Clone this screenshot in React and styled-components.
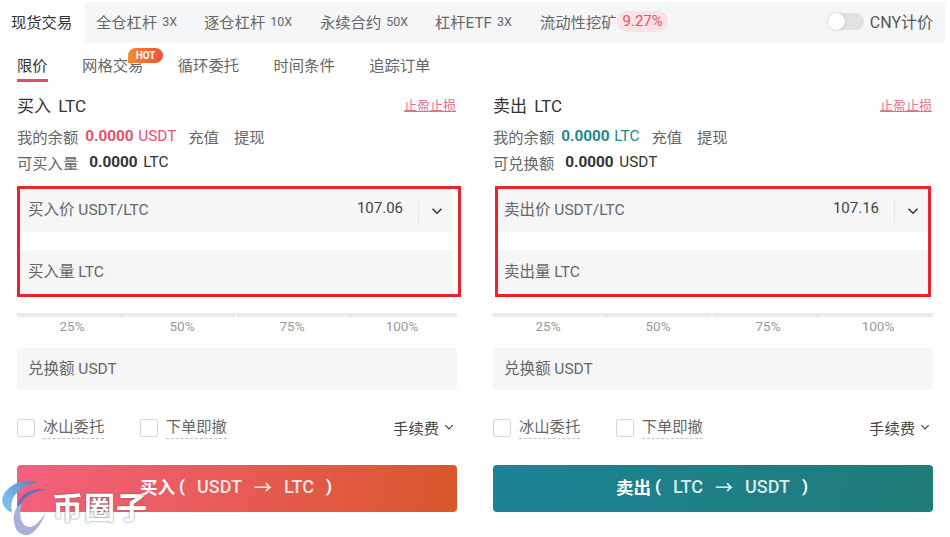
import React from "react";
import styled, { createGlobalStyle } from "styled-components";

const GlobalStyle = createGlobalStyle`
  html, body {
    margin: 0;
    padding: 0;
    background: #fff;
  }
  body {
    font-family: "Roboto", "Noto Sans CJK SC", sans-serif;
    color: #333;
  }
  * {
    box-sizing: border-box;
  }
`;

const Page = styled.div`
  position: relative;
  width: 950px;
  height: 537px;
  overflow: hidden;
  padding-top: 2px;
`;

const TopBar = styled.div`
  display: flex;
  align-items: center;
  height: 41px;
  width: 945px;
  background: #f5f6f7;
  font-size: 15.3px;
  color: #666;
`;

const TopTab = styled.div`
  display: flex;
  align-items: center;
  height: 100%;
  width: ${(p) => p.$w}px;
  padding: 0 0 3px 11px;
  white-space: nowrap;
  background: ${(p) => (p.$active ? "#fff" : "transparent")};
  color: ${(p) => (p.$active ? "#333" : "#666")};
`;

const Leverage = styled.span`
  margin-left: 5px;
  font-size: 12.5px;
`;

const Rate = styled.span`
  padding: 0 5px 1px 6px;
  border-radius: 10px;
  background: #f9e3e6;
  color: #e8526b;
  font-size: 15px;
  line-height: 20px;
`;

const CnySwitch = styled.div`
  display: flex;
  align-items: center;
  margin-left: auto;
  margin-right: 12px;
  padding-bottom: 3px;
  font-size: 16px;
  color: #555;
`;

const SwitchTrack = styled.div`
  position: relative;
  width: 36px;
  height: 17px;
  margin-right: 6px;
  border-radius: 9px;
  background: #e2e2e2;
`;

const SwitchKnob = styled.div`
  position: absolute;
  left: 0;
  top: 0;
  width: 17px;
  height: 17px;
  border-radius: 50%;
  background: #fff;
  box-shadow: 0 0 3px rgba(0, 0, 0, 0.2);
`;

const SubTabs = styled.div`
  display: flex;
  height: 40px;
  padding-left: 17px;
  gap: 34.5px;
  font-size: 15.3px;
  color: #666;
`;

const SubTab = styled.div`
  position: relative;
  height: 40px;
  padding-top: 12px;
  line-height: 22px;
  white-space: nowrap;
  color: ${(p) => (p.$active ? "#333" : "#666")};
  &::after {
    content: "";
    display: ${(p) => (p.$active ? "block" : "none")};
    position: absolute;
    left: 0;
    right: 0;
    top: 36px;
    height: 3px;
    background: #d8506a;
  }
`;

const HotBadge = styled.span`
  position: absolute;
  left: 46px;
  top: 5px;
  width: 35px;
  height: 15px;
  border-radius: 8px 8px 8px 0;
  background: linear-gradient(90deg, #f58a2c, #f0503c);
  color: #fff;
  font-size: 10px;
  font-weight: 700;
  line-height: 15px;
  text-align: center;
`;

const Panels = styled.div`
  display: flex;
  padding-left: 17px;
  gap: 36px;
`;

const Panel = styled.div`
  width: 440px;
`;

const TitleRow = styled.div`
  display: flex;
  align-items: center;
  justify-content: space-between;
  height: 24px;
  margin-top: 9px;
  font-size: 17px;
  word-spacing: 3px;
  color: #333;
`;

const StopLink = styled.span`
  margin-right: 1px;
  font-size: 13px;
  color: #e2708a;
  text-decoration: underline;
`;

const InfoRow = styled.div`
  display: flex;
  align-items: center;
  height: 26px;
  margin-top: ${(p) => p.$top || 0}px;
  font-size: 15.3px;
  color: #666;
  white-space: nowrap;
`;

const Balance = styled.span`
  margin: 0 12px 0 7px;
  color: ${(p) => p.$color};
  word-spacing: 1px;
  b {
    font-weight: 700;
  }
`;

const Amount = styled.span`
  margin-left: 11px;
  color: #333;
  word-spacing: 2px;
  b {
    font-weight: 700;
  }
`;

const ActionLink = styled.span`
  margin-right: 15px;
`;

/* two fields with the red annotation frame drawn over them */
const InputGroup = styled.div`
  position: relative;
  display: flex;
  flex-direction: column;
  gap: 18px;
  margin-top: 14px;
  padding: 0 4px 0 3px;
`;

const RedFrame = styled.div`
  position: absolute;
  left: ${(p) => p.$left}px;
  top: -3px;
  bottom: -3px;
  width: ${(p) => p.$w}px;
  border: 3px solid #e8252f;
  pointer-events: none;
`;

const InputRow = styled.div`
  display: flex;
  align-items: center;
  height: ${(p) => p.$h}px;
  padding-left: 8px;
  background: #f6f6f6;
  font-size: 15.5px;
  color: #666;
`;

const InputText = styled.span`
  margin-bottom: ${(p) => p.$lift}px;
`;

const Price = styled(InputText)`
  margin-left: auto;
  padding-right: 15px;
  font-size: 15px;
  color: #444;
`;

const UnitDrop = styled.span`
  display: flex;
  align-items: center;
  justify-content: center;
  width: 35px;
  height: 23px;
  padding-left: 1px;
  border-left: 1px solid #e6e6e6;
`;

const Slider = styled.div`
  display: grid;
  grid-template-columns: repeat(4, 1fr);
  margin-top: 19px;
  border-top: 4px solid #e9e9e9;
`;

const Mark = styled.div`
  position: relative;
  text-align: center;
  font-size: 13.5px;
  line-height: 16px;
  padding: 1px 0 1px;
  color: #9a9a9a;
  &:not(:last-child)::after {
    content: "";
    position: absolute;
    right: 0;
    top: -4px;
    width: 2px;
    height: 4px;
    background: #f4f4f4;
  }
`;

const TotalRow = styled.div`
  display: flex;
  align-items: center;
  height: 42px;
  margin-top: 13px;
  padding: 0 11px 4px;
  border-radius: 3px;
  background: #f6f6f6;
  font-size: 15.5px;
  color: #666;
`;

const OptionRow = styled.div`
  display: flex;
  align-items: center;
  height: 22px;
  margin-top: 27px;
  font-size: 15.3px;
  color: #666;
`;

const CheckBox = styled.span`
  width: 18px;
  height: 18px;
  margin-right: 8px;
  border: 1px solid #d8d8d8;
  border-radius: 2px;
  background: #fff;
`;

const OptionLabel = styled.span`
  margin-right: 35.5px;
  line-height: 20px;
  padding-bottom: 1px;
  border-bottom: 1px dashed #c4c4c4;
`;

const Fee = styled.span`
  display: flex;
  align-items: center;
  gap: 5px;
  margin-left: auto;
  margin-right: 3px;
  padding-bottom: 2px;
  color: #444;
`;

const ActionButton = styled.div`
  display: flex;
  align-items: center;
  justify-content: center;
  gap: 12px;
  height: 47px;
  margin-top: 26px;
  padding: 0 2px 5px 0;
  border-radius: 4px;
  background: ${(p) => p.$bg};
  color: #fff;
  font-size: 17px;
  font-weight: 700;
  white-space: nowrap;
`;

const ButtonSide = styled.span`
  margin-right: -8px;
  font-size: 17.5px;
`;

const ButtonPair = styled.span`
  font-size: 18px;
  font-weight: 500;
  color: rgba(255, 255, 255, 0.86);
`;

const Watermark = styled.div`
  position: absolute;
  left: 0;
  top: 470px;
  width: 150px;
  height: 67px;
  pointer-events: none;
`;

const WatermarkText = styled.span`
  position: absolute;
  left: 52px;
  top: 21px;
  font-size: 31px;
  line-height: 36px;
  font-weight: 700;
  color: #fff;
  letter-spacing: 1px;
  text-shadow: 0 0 2px rgba(90, 90, 90, 0.95);
`;

function Chevron({ size = 12, color = "#333" }) {
  return (
    <svg width={size} height={size} viewBox="0 0 12 12" fill="none">
      <path d="M1.5 3.8 6 8.2l4.5-4.4" stroke={color} strokeWidth="1.5" />
    </svg>
  );
}

function TradePanel({ side }) {
  const buy = side === "buy";
  const base = buy ? "USDT" : "LTC";
  const target = buy ? "LTC" : "USDT";
  return (
    <Panel>
      <TitleRow>
        <span>{buy ? "买入" : "卖出"} LTC</span>
        <StopLink>止盈止损</StopLink>
      </TitleRow>
      <InfoRow $top={7}>
        我的余额
        <Balance $color={buy ? "#e8526b" : "#1f8a8c"}>
          <b>0.0000</b> {base}
        </Balance>
        <ActionLink>充值</ActionLink>
        <ActionLink>提现</ActionLink>
      </InfoRow>
      <InfoRow>
        {buy ? "可买入量" : "可兑换额"}
        <Amount>
          <b>0.0000</b> {target}
        </Amount>
      </InfoRow>
      <InputGroup>
        <InputRow $h={43}>
          <InputText $lift={6}>{buy ? "买入价" : "卖出价"} USDT/LTC</InputText>
          <Price $lift={6}>{buy ? "107.06" : "107.16"}</Price>
          <UnitDrop>
            <Chevron />
          </UnitDrop>
        </InputRow>
        <InputRow $h={44}>
          <InputText $lift={4}>{buy ? "买入量" : "卖出量"} LTC</InputText>
        </InputRow>
        <RedFrame $left={buy ? 0 : 2} $w={buy ? 444 : 436} />
      </InputGroup>
      <Slider>
        <Mark>25%</Mark>
        <Mark>50%</Mark>
        <Mark>75%</Mark>
        <Mark>100%</Mark>
      </Slider>
      <TotalRow>兑换额 USDT</TotalRow>
      <OptionRow>
        <CheckBox />
        <OptionLabel>冰山委托</OptionLabel>
        <CheckBox />
        <OptionLabel>下单即撤</OptionLabel>
        <Fee>
          手续费
          <Chevron size={10} color="#444" />
        </Fee>
      </OptionRow>
      <ActionButton
        $bg={
          buy
            ? "linear-gradient(100deg, #f4607f, #d9562a)"
            : "linear-gradient(100deg, #1d8296, #1f7c78)"
        }
      >
        <ButtonSide>{buy ? "买入" : "卖出"}</ButtonSide>
        <span>(</span>
        <ButtonPair>{base}</ButtonPair>
        <ButtonPair>→</ButtonPair>
        <ButtonPair>{target}</ButtonPair>
        <span>)</span>
      </ActionButton>
    </Panel>
  );
}

export default function App() {
  return (
    <Page>
      <GlobalStyle />
      <TopBar>
        <TopTab $w={85} $active>现货交易</TopTab>
        <TopTab $w={108}>全仓杠杆<Leverage>3X</Leverage></TopTab>
        <TopTab $w={116}>逐仓杠杆<Leverage>10X</Leverage></TopTab>
        <TopTab $w={115}>永续合约<Leverage>50X</Leverage></TopTab>
        <TopTab $w={105}>杠杆ETF<Leverage>3X</Leverage></TopTab>
        <TopTab $w={150}>
          流动性挖矿<Rate>9.27%</Rate>
        </TopTab>
        <CnySwitch>
          <SwitchTrack>
            <SwitchKnob />
          </SwitchTrack>
          CNY计价
        </CnySwitch>
      </TopBar>
      <SubTabs>
        <SubTab $active>限价</SubTab>
        <SubTab>
          网格交易
          <HotBadge>HOT</HotBadge>
        </SubTab>
        <SubTab>循环委托</SubTab>
        <SubTab>时间条件</SubTab>
        <SubTab>追踪订单</SubTab>
      </SubTabs>
      <Panels>
        <TradePanel side="buy" />
        <TradePanel side="sell" />
      </Panels>
      <Watermark>
        <svg width="50" height="67" viewBox="0 0 50 67" fill="none">
          <defs>
            <linearGradient id="arcTop" x1="0" y1="1" x2="1" y2="0">
              <stop offset="0.3" stopColor="#74bdec" />
              <stop offset="1" stopColor="#6a78b8" />
            </linearGradient>
          </defs>
          <path d="M12 43C0 37 0 27 7 20C15 12 27 8 38 13C27 13 18 20 13 28C11 33 11 38 12 43Z" fill="url(#arcTop)" />
          <path d="M17 38C18 26 30 16 47 20C36 20 26 26 22 32C20 35 18 37 17 38Z" fill="#6a6fb5" />
          <path d="M17 37C11 46 13 62 24 65C33 67 41 55 46 42C40 52 32 60 26 56C20 52 19 44 22 33Z" fill="#aab0d8" />
        </svg>
        <WatermarkText>币圈子</WatermarkText>
      </Watermark>
    </Page>
  );
}
